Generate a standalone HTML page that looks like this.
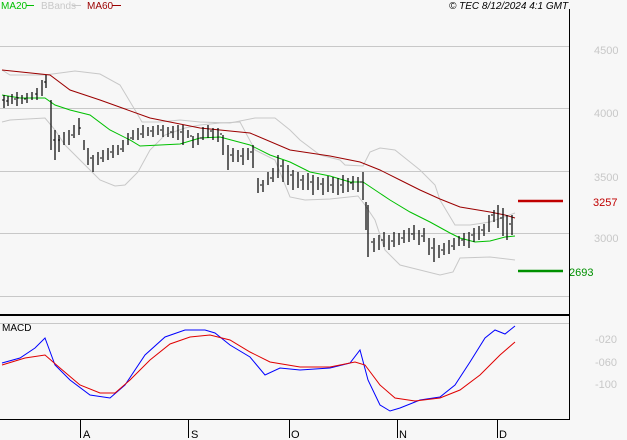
<!DOCTYPE html><html><head><style>body{margin:0;background:#f7f7f7}svg{display:block;font-family:"Liberation Sans",sans-serif}</style></head><body>
<svg width="627" height="440" viewBox="0 0 627 440">
<rect width="627" height="440" fill="#f7f7f7"/>
<g stroke="#c8c8c8" stroke-width="1">
<line x1="0" y1="46.5" x2="569" y2="46.5"/><line x1="0" y1="108.5" x2="569" y2="108.5"/><line x1="0" y1="171.5" x2="569" y2="171.5"/><line x1="0" y1="233.5" x2="569" y2="233.5"/><line x1="0" y1="296.5" x2="569" y2="296.5"/><line x1="0" y1="323.5" x2="569" y2="323.5"/>
</g>
<g fill="#c8c8c8" font-size="11"><text x="594" y="54">4500</text><text x="594" y="117">4000</text><text x="594" y="181">3500</text><text x="594" y="242">3000</text>
<text x="595" y="343">-020</text><text x="595" y="366">-060</text><text x="595" y="388">-100</text></g>
<g fill="none" stroke-width="1">
<polyline stroke="#c8c8c8" points="2,70 10,75 45,75 60,73 75,71 100,74 120,85 135,110 142,122 160,122 180,120 200,122 230,123 255,118 275,118 290,130 300,140 320,155 340,160 345,165 363,166 370,152 380,148 395,150 420,170 435,185 440,200 455,225 470,225 490,222 515,213"/>
<polyline stroke="#c8c8c8" points="2,122 10,120 45,118 55,130 65,145 85,165 100,180 115,186 125,185 138,172 150,150 165,135 185,128 200,125 220,123 240,122 255,150 275,160 290,197 305,200 330,199 358,196 365,205 375,220 385,250 400,265 420,270 440,275 453,272 460,258 490,257 515,260"/>
<polyline stroke="#9b0000" points="2,70 50,75 70,90 100,100 150,118 200,128 250,133 290,150 310,153 330,156 360,162 380,170 400,180 420,190 440,199 460,207 490,212 505,215 515,218"/>
<polyline stroke="#00c000" points="2,95 20,98 45,98 55,105 70,110 90,115 110,130 130,140 140,146 160,145 180,144 200,138 220,137 250,145 270,155 290,162 310,172 330,176 350,182 363,182 375,190 390,200 410,212 430,222 450,233 460,238 475,242 490,241 505,237 515,236"/>
</g>
<path stroke="#000" fill="none" stroke-width="1.2" d="M4,95V108M8,96V106M12,94V104M17,92V106M22,95V104M27,93V103M32,92V100M37,88V100M42,80V96M46,75V88M51,100V150M55,130V160M59,135V152M64,132V145M69,130V145M74,125V138M79,118V135M84,140V150M88,148V165M93,155V172M98,152V165M103,150V162M108,148V160M113,145V158M118,145V155M123,140V152M128,133V145M133,130V140M138,128V140M143,125V138M148,127V136M153,126V137M158,125V135M163,125V137M168,127V137M173,126V138M178,125V140M183,125V145M188,130V138M193,136V148M198,133V145M203,127V140M208,125V138M213,128V140M218,128V142M223,135V155M228,145V170M233,148V162M238,150V162M243,148V165M248,148V160M253,145V168M258,178V193M263,180V192M268,172V185M273,168V182M278,155V178M283,160V182M288,165V185M293,170V190M298,172V188M303,175V190M308,173V190M313,175V195M318,177V190M323,178V195M328,176V192M333,177V193M338,178V195M343,175V193M348,178V192M353,176V190M358,177V192M363,172V200M366,202V230M368,205V257M374,238V252M379,235V250M384,232V247M389,235V250M394,232V247M399,233V245M404,230V243M409,228V242M414,225V240M419,230V245M424,228V242M429,238V255M434,238V262M439,245V258M444,243V255M449,240V254M454,238V250M459,236V246M464,233V246M469,232V248M474,228V242M479,226V240M484,224V236M489,215V232M494,210V222M498,205V228M503,208V236M507,215V240M512,215V235"/>
<path stroke="#000" stroke-width="1" d="M2,100h2M6,101h2M14,99h2M19,98h-2M24,99h2M35,94h2M44,82h2M53,140h2M60,140h-2M71,135h2M81,128h-2M90,158h2M100,158h2M110,152h2M120,149h2M130,138h2M140,134h2M150,131h2M160,130h2M170,132h2M180,132h2M190,136h2M200,138h2M210,131h2M220,134h2M230,155h2M240,156h2M250,152h2M260,185h2M270,178h2M280,166h2M290,175h2M300,180h2M310,182h2M320,184h2M330,185h2M340,185h2M350,183h2M360,182h2M371,242h2M381,240h2M391,241h2M401,238h2M411,234h2M421,236h2M431,248h2M441,250h2M451,246h2M461,240h2M471,235h2M481,230h2M491,215h2M500,218h2M509,224h2"/>
<g fill="none" stroke-width="1">
<polyline stroke="#0000ff" points="2,363 20,358 35,348 45,338 55,365 70,380 90,395 110,398 125,385 145,355 165,337 185,330 205,330 215,333 230,345 250,357 265,375 280,368 300,370 330,368 350,363 360,350 368,380 380,405 390,411 400,408 420,400 440,397 455,385 470,362 485,338 495,330 505,334 515,326"/>
<polyline stroke="#e00000" points="2,365 25,358 45,355 60,368 80,385 100,393 115,393 130,380 150,360 170,344 190,337 210,335 230,340 250,352 270,362 300,367 330,367 355,362 365,365 380,385 395,398 415,401 440,398 460,390 480,375 500,355 515,342"/>
</g>
<line x1="518" y1="201" x2="563" y2="201" stroke="#c00000" stroke-width="2.5"/>
<line x1="518" y1="271" x2="563" y2="271" stroke="#009000" stroke-width="2.5"/>
<text x="593" y="206" font-size="11" fill="#c00000">3257</text>
<text x="569" y="276" font-size="11" fill="#009000">2693</text>
<g stroke="#000"><line x1="569.5" y1="9" x2="569.5" y2="420" stroke-width="1"/>
<line x1="0" y1="315" x2="570" y2="315" stroke-width="2"/><line x1="0" y1="419.5" x2="570" y2="419.5"/>
<line x1="80.5" y1="419" x2="80.5" y2="438"/><line x1="188.5" y1="419" x2="188.5" y2="438"/><line x1="289.5" y1="419" x2="289.5" y2="438"/><line x1="397.5" y1="419" x2="397.5" y2="438"/><line x1="497.5" y1="419" x2="497.5" y2="438"/></g>
<g font-size="11" fill="#000"><text x="83" y="438">A</text><text x="191" y="438">S</text><text x="291" y="438">O</text><text x="399" y="438">N</text><text x="499" y="438">D</text>
<text x="2" y="331" font-size="10">MACD</text>
<text x="449" y="9" font-size="10" font-style="italic">© TEC 8/12/2024 4:1 GMT</text></g>
<g font-size="10"><text x="1" y="9" fill="#00c000">MA20</text><line x1="26" y1="5.5" x2="34" y2="5.5" stroke="#00c000"/>
<text x="41" y="9" fill="#c8c8c8">BBands</text><line x1="72" y1="5.5" x2="81" y2="5.5" stroke="#c8c8c8"/>
<text x="87" y="9" fill="#9b0000">MA60</text><line x1="112" y1="5.5" x2="121" y2="5.5" stroke="#9b0000"/></g>
</svg></body></html>
